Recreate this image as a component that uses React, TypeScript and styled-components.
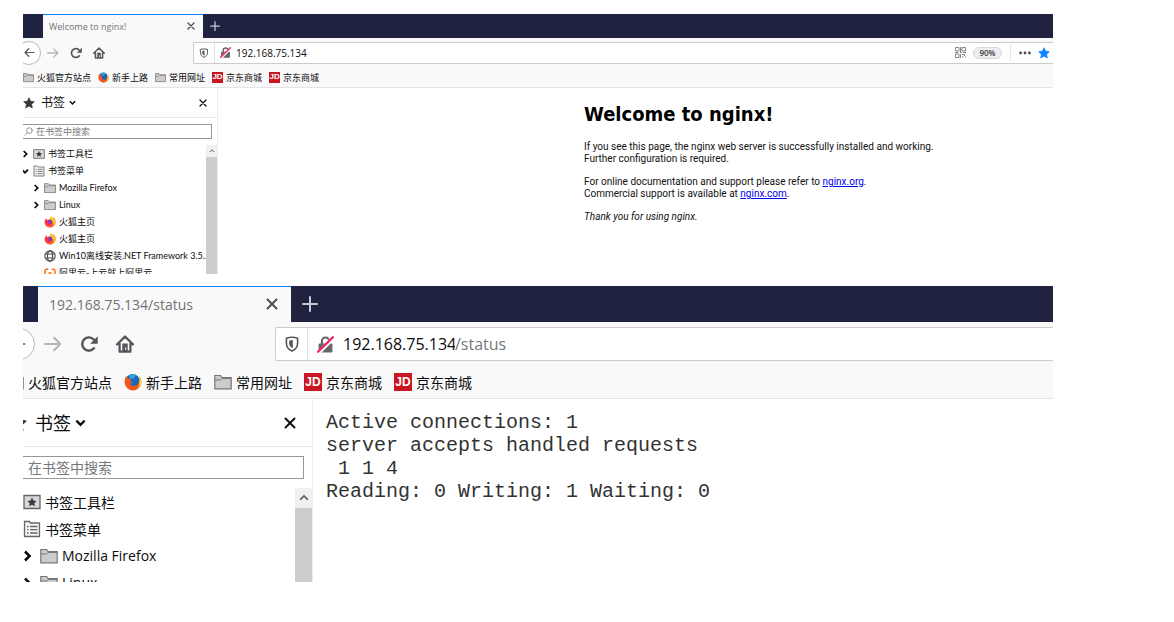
import React from "react";
import styled, { createGlobalStyle, css, ThemeProvider } from "styled-components";

const uiFont = `"Open Sans", "Noto Sans CJK SC", sans-serif`;

/* Two zoom levels of the same browser chrome. */
const compact = {
  height: 260, shift: 8,
  tabs: 24, tabLead: 28, tabWidth: 160, tabFont: 9, tabPad: 6, newTab: 24, tabIcon: 8, plus: 10,
  nav: 29, circle: 24, circlePad: 2, slot: 23, navIcon: 12, fieldGap: 83, field: 22,
  shieldSlot: 21, lockSlot: 21, urlFont: 10, urlWidth: 72, urlIcon: 11,
  marks: 21, marksPad: 8, marksGap: 7, markIcon: 11, markGap: 3, font: 9, badgeFont: 8,
  side: 203, head: 30, headPad: 8, headIcon: 12, headGap: 6, headFont: 12, closeRight: 10,
  searchTop: 6, search: 15, searchLeft: 5, searchRight: 5, searchIcon: 9, searchPad: 3, searchGap: 3,
  row: 17, rowPad: 5, twisty: 10, twistyGap: 3, rowIcon: 12, rowGap: 3, indent: 11, treeTop: 6,
  treeFont: `Lato, "Noto Sans CJK SC", sans-serif`,
  bar: 11, barButton: 12,
};

const large = {
  height: 296, shift: 24,
  tabs: 36, tabLead: 39, tabWidth: 253, tabFont: 14, tabPad: 11, newTab: 37, tabIcon: 12, plus: 16,
  nav: 44, circle: 32, circlePad: 4, slot: 36, navIcon: 18, fieldGap: 132, field: 34,
  shieldSlot: 32, lockSlot: 35, urlFont: 16, urlWidth: 112, urlIcon: 17,
  marks: 33, marksPad: 7, marksGap: 12, markIcon: 18, markGap: 4, font: 14, badgeFont: 12,
  side: 314, head: 48, headPad: 10, headIcon: 18, headGap: 8, headFont: 18, closeRight: 16,
  searchTop: 9, search: 23, searchLeft: 6, searchRight: 8, searchIcon: 14, searchPad: 3, searchGap: 5,
  row: 27, rowPad: 4, twisty: 14, twistyGap: 6, rowIcon: 18, rowGap: 4, indent: 17, treeTop: 9,
  treeFont: uiFont,
  bar: 17, barButton: 20,
};

type Scale = typeof compact;
const px = (key: keyof Scale) => ({ theme }: { theme: any }) => `${theme[key]}px`;

const Global = createGlobalStyle`
  * { box-sizing: border-box; }
  body { margin: 0; background: #fff; color: #0c0c0d; font-family: ${uiFont}; }
  button, input { font: inherit; color: inherit; margin: 0; padding: 0; border: 0; background: none; }
  button { display: flex; align-items: center; justify-content: center; }
  svg { display: block; flex: none; }
`;

const Page = styled.main`
  display: flex;
  flex-direction: column;
  gap: 12px;
  padding: 14px 121px 40px 23px;
`;

const Window = styled.section`
  overflow: hidden;
  height: ${px("height")};
`;

const Frame = styled.div`
  display: flex;
  flex-direction: column;
  height: 100%;
  margin-left: -${px("shift")};
`;

const TabStrip = styled.div`
  display: flex;
  flex: none;
  height: ${px("tabs")};
  padding-left: ${px("tabLead")};
  background: #20233f;
`;

const Tab = styled.div`
  display: flex;
  align-items: center;
  justify-content: space-between;
  width: ${px("tabWidth")};
  padding: 0 ${px("tabPad")} 1px ${px("tabPad")};
  border-top: 1px solid #0a84ff;
  background: #f9f9fa;
  color: #737378;
  font-size: ${px("tabFont")};
`;

const TabButton = styled.button`
  width: ${px("tabIcon")};
  height: 100%;
  color: #4a4a4f;
  margin: 0 2px;
`;

const NewTab = styled.button`
  width: ${px("newTab")};
  color: #c9cad3;
`;

const NavBar = styled.div`
  display: flex;
  flex: none;
  align-items: center;
  height: ${px("nav")};
  padding-left: ${px("circlePad")};
  background: #f9f9fa;
  color: #55555a;
`;

const BackButton = styled.button`
  width: ${px("circle")};
  height: ${px("circle")};
  border: 1px solid #b8b8ba;
  border-radius: 50%;
  background: #fff;
  flex: none;
`;

const NavButton = styled.button<{ $dim?: boolean }>`
  width: ${px("slot")};
  flex: none;
  ${({ $dim }) => $dim && css`color: #b5b5b8;`}
`;

const UrlField = styled.div`
  display: flex;
  align-items: center;
  flex: 1;
  height: ${px("field")};
  margin-left: ${px("fieldGap")};
  border: 1px solid #ccc;
  border-right: 0;
  border-radius: 2px 0 0 2px;
  background: #fff;
  font-size: ${px("urlFont")};
`;

const ShieldButton = styled.button`
  width: ${px("shieldSlot")};
  height: 100%;
  border-right: 1px solid #e0e0e2;
`;

const LockButton = styled.button`
  width: ${px("lockSlot")};
`;

const UrlInput = styled.input`
  width: ${px("urlWidth")};
  color: #0c0c0d;
  outline: 0;
`;

const UrlPath = styled.span`
  color: #77777a;
`;

const PageActions = styled.div`
  display: flex;
  align-items: center;
  gap: 7px;
  margin-left: auto;
  padding-right: 3px;
`;

const ZoomPill = styled.button`
  width: 29px;
  height: 12px;
  border: 1px solid #d8d8da;
  border-radius: 6px;
  background: #ededf0;
  color: #38383d;
  font-size: 8px;
  font-weight: 600;
`;

const Divider = styled.span`
  width: 1px;
  height: 16px;
  margin: 0 1px;
  background: #e4e4e6;
`;

const MarksBar = styled.nav`
  display: flex;
  flex: none;
  align-items: center;
  gap: ${px("marksGap")};
  height: ${px("marks")};
  padding-left: ${px("marksPad")};
  background: #f9f9fa;
  border-bottom: 1px solid #e4e4e6;
  font-size: ${px("font")};
`;

const Mark = styled.a`
  display: flex;
  align-items: center;
  gap: ${px("markGap")};
  color: #0c0c0d;
  text-decoration: none;
  white-space: nowrap;
`;

const JdBadge = styled.span`
  display: flex;
  align-items: center;
  justify-content: center;
  width: ${px("markIcon")};
  height: ${px("markIcon")};
  background: #c81623;
  color: #fff;
  font: bold ${px("badgeFont")}/1 "Liberation Sans", sans-serif;
`;

const Body = styled.div`
  display: flex;
  flex: 1;
  min-height: 0;
`;

const Sidebar = styled.aside`
  display: flex;
  flex-direction: column;
  flex: none;
  width: ${px("side")};
  border-right: 1px solid #ececee;
`;

const SideHead = styled.header`
  display: flex;
  align-items: center;
  justify-content: space-between;
  flex: none;
  height: ${px("head")};
  padding: 0 ${px("closeRight")} 0 ${px("headPad")};
  border-bottom: 1px solid #e8e8ea;
  font-size: ${px("headFont")};
`;

const SideTitle = styled.button`
  gap: ${px("headGap")};
  line-height: 1;
`;

const TitleText = styled.span`
  display: flex;
  align-items: center;
  gap: 4px;
`;

const SearchBox = styled.label`
  display: flex;
  align-items: center;
  flex: none;
  gap: ${px("searchGap")};
  height: ${px("search")};
  margin: ${px("searchTop")} ${px("searchRight")} 0 ${px("searchLeft")};
  padding-left: ${px("searchPad")};
  border: 1px solid #97979a;
  color: #77777a;
  font-size: ${px("font")};
`;

const SearchInput = styled.input`
  flex: 1;
  min-width: 0;
  outline: 0;
  &::placeholder { color: #77777a; opacity: 1; }
`;

const TreeArea = styled.div`
  display: flex;
  flex: 1;
  min-height: 0;
  margin-top: ${px("treeTop")};
`;

const Tree = styled.ul`
  flex: 1;
  min-width: 0;
  margin: 0;
  padding: 0;
  overflow: hidden;
  list-style: none;
  font-family: ${({ theme }: any) => theme.treeFont};
  font-size: ${px("font")};
`;

const Row = styled.li<{ $level: number }>`
  display: flex;
  align-items: center;
  height: ${px("row")};
  padding-left: ${({ theme, $level }: any) => theme.rowPad + theme.indent * $level}px;
  white-space: nowrap;
`;

const Twisty = styled.span`
  display: flex;
  justify-content: center;
  flex: none;
  width: ${px("twisty")};
  margin-right: ${px("twistyGap")};
`;

const RowLabel = styled.span`
  margin-left: ${px("rowGap")};
`;

const ScrollBar = styled.div`
  display: flex;
  flex-direction: column;
  flex: none;
  width: ${px("bar")};
  background: #cdcdcd;
`;

const ScrollButton = styled.button`
  height: ${px("barButton")};
  background: #f0f0f0;
  color: #606060;
`;

const Welcome = styled.article`
  flex: 1;
  padding: 14px 0 0 366px;
  color: #111;
  font: 10px/12px Roboto, sans-serif;
  white-space: nowrap;
  h1 { margin: 0 0 14px; color: #000; font: bold 20px/25px "DejaVu Sans Condensed", "DejaVu Sans", sans-serif; }
  p { margin: 0 0 11px; }
  a { color: #00e; }
`;

const Status = styled.pre`
  flex: 1;
  margin: 0;
  padding: 12px 0 0 13px;
  color: #333;
  font: 20px/23px "Liberation Mono", monospace;
`;

type IconProps = { size: number };
const stroke = { fill: "none", stroke: "currentColor", strokeWidth: 2, strokeLinecap: "round", strokeLinejoin: "round" } as const;

const Cross = ({ size }: IconProps) => (
  <svg width={size} height={size} viewBox="0 0 12 12" {...stroke} strokeWidth={1.9}><path d="M1.5 1.5l9 9M10.5 1.5l-9 9" /></svg>
);
const Plus = ({ size }: IconProps) => (
  <svg width={size} height={size} viewBox="0 0 16 16" {...stroke}><path d="M8 1v14M1 8h14" /></svg>
);
const Arrow = ({ size, back }: IconProps & { back?: boolean }) => (
  <svg width={size} height={size} viewBox="0 0 16 16" {...stroke} strokeWidth={1.8}>
    {back ? <path d="M14.5 8H1.5M7 2.5L1.5 8 7 13.5" /> : <path d="M1 8h13.500M9 2.500L14.500 8 9 13.500" />}
  </svg>
);
const Reload = ({ size }: IconProps) => (
  <svg width={size} height={size} viewBox="0 0 16 16">
    <path {...stroke} strokeWidth={2.200} d="M12.400 11.800A5.900 5.900 0 1 1 12.200 4" />
    <path fill="currentColor" d="M15.800 1v6.800H9z" />
  </svg>
);
const Home = ({ size }: IconProps) => (
  <svg width={size} height={size} viewBox="0 0 16 16">
    <path {...stroke} d="M1 8.300L8 1.300l7 7M3.200 7.500v7.300h9.600V7.500" />
    <path fill="currentColor" fillRule="evenodd" d="M5.600 7.500h4.800v7.300H5.600zM8 11v2.200h1V11z" />
  </svg>
);
const Shield = ({ size }: IconProps) => (
  <svg width={size} height={size} viewBox="0 0 16 16">
    <path {...stroke} strokeWidth={1.6} d="M2.400 2.200Q8 .4 13.600 2.200v5c0 4-2.100 6.400-5.600 7.800-3.500-1.400-5.600-3.800-5.600-7.800z" />
    <path fill="currentColor" d="M8.800 4l-3.600.6v2.800c0 2.400 1.400 3.800 3.600 4.900z" />
  </svg>
);
const Lock = ({ size }: IconProps) => (
  <svg width={size} height={size} viewBox="0 0 16 16">
    <path fill="none" stroke="#66666b" strokeWidth="2" d="M4.600 7.500V4.800a3.400 3.400 0 0 1 6.800 0v2.700" />
    <rect x="1.500" y="7" width="13" height="8.500" rx="1" fill="#66666b" />
    <path stroke="#fff" strokeWidth="3.600" d="M1.600 15.800L15.600 1.600" />
    <path stroke="#f0245a" strokeWidth="2.200" strokeLinecap="round" d="M1 14.800L15 1.200" />
  </svg>
);
const Folder = ({ size }: IconProps) => (
  <svg width={size} height={size} viewBox="0 0 18 18">
    <path d="M.8 15.800V2.500h5.700l1.500 2h9.200v11.300z" fill="#ccc" stroke="#77777a" strokeWidth="1.200" />
    <path d="M1 7h5.500l1.500-1.500h9" fill="none" stroke="#77777a" />
  </svg>
);
const Firefox = ({ size, old }: IconProps & { old?: boolean }) =>
  old ? (
    <svg width={size} height={size} viewBox="0 0 18 18">
      <circle cx="8.600" cy="8" r="7" fill="#1668bd" />
      <path fill="#29a8e0" d="M5 2.500C7 1 10 .8 12 2L9.500 6 6 5z" />
      <path fill="#ef5a1c" d="M1.800 3.500C.6 6 .3 9 1 11.500 2.200 15 5.400 17.400 9 17.400c4.600 0 8.300-3.700 8.300-8.200 0-2.500-.8-4.500-2.100-6 .4 2 .5 3.600.1 5.200-.7 3-3.200 4.700-5.900 4.400-2-.2-3.400-1.300-3.800-2.500 1.200.6 2.600.2 3.300-.8-1 0-2.200-.4-2.600-1.400-.2-.8.1-1.400 1.200-1.800-.9-.9-2-1.100-3.100-.9-.8-.5-1.100-1.100-1.300-1.900z" />
      <path fill="#ffcf26" d="M15.200 3.200c1.300 1.500 2.100 3.500 2.100 6 0 3-1.600 5.600-4 7 1.500-1.700 2.200-3.700 1.700-6 .8-2.300.7-4.600.2-7z" />
    </svg>
  ) : (
    <svg width={size} height={size} viewBox="0 0 18 18">
      <path fill="#ff5a2c" d="M3.500 3C1 6 .4 8.500 1 11.200 2 15 5.200 17.400 9 17.400c4.800 0 8.400-3.700 8.400-8.300 0-3-1.300-5.200-3.300-6.700L12 5 4.500 6z" />
      <path fill="#ffc525" d="M9.500.6c3.800.9 7.600 4.100 7.700 8.600.1 3.600-2.100 6.100-4.300 7 1.700-2.300 2-5 .8-7-.8-1.400-3.700-2-4.600-4C8.500 3.700 8.700 2 9.500.6z" />
      <circle cx="8.700" cy="8.600" r="3.300" fill="#6c3bc9" />
      <path fill="#f5325f" d="M1.600 6.500c2-.7 4-.2 5 .8 1.400.1 2 .6 1.500 1.400-.7 1-1.800.8-1.900 2 1.300 1.800 3.700 1.600 5.300.7-1 2.900-4 4-6.500 2.500C2.500 12.400 1 9.600 1.600 6.500z" />
    </svg>
  );
const Star = ({ size, color = "#38383d" }: IconProps & { color?: string }) => (
  <svg width={size} height={size} viewBox="0 0 16 16">
    <path fill={color} stroke={color} strokeLinejoin="round" d="M8 1l2.100 4.600 5 .6-3.700 3.400 1 5L8 12.100l-4.400 2.500 1-5L.9 6.200l5-.6z" />
  </svg>
);
const Chevron = ({ size, turn = 0, weight = 2 }: IconProps & { turn?: number; weight?: number }) => (
  <svg width={size} height={size} viewBox="0 0 12 12" {...stroke} strokeWidth={weight} strokeLinecap="butt" strokeLinejoin="miter">
    <path transform={`rotate(${turn} 6 6)`} d="M1.500 4L6 8.500 10.500 4" />
  </svg>
);
const Lens = ({ size }: IconProps) => (
  <svg width={size} height={size} viewBox="0 0 12 12" {...stroke} strokeWidth={1}><circle cx="7.200" cy="4.800" r="3.800" /><path d="M4.500 7.500L1 11" /></svg>
);
const ToolbarIcon = ({ size }: IconProps) => (
  <svg width={size} height={size} viewBox="0 0 18 18">
    <path d="M1 2.500h16v13H1z" fill="#d8d8da" stroke="#66666b" strokeWidth="1.300" />
    <path fill="#38383d" d="M9 4.500l1.400 3 3.300.4-2.400 2.200.6 3.200L9 11.700l-2.900 1.600.6-3.200-2.400-2.200 3.300-.4z" />
  </svg>
);
const MenuIcon = ({ size }: IconProps) => (
  <svg width={size} height={size} viewBox="0 0 18 18" fill="none" stroke="#66666b" strokeWidth="1.300">
    <path d="M1.500 16.500v-15h5l1 1.500h9v13.500z" fill="#f4f4f5" />
    <path d="M4 6.500h1.500M7 6.500h7.500M4 9.700h1.500M7 9.700h7.500M4 13h1.500M7 13h7.500" />
  </svg>
);
const Globe = ({ size }: IconProps) => (
  <svg width={size} height={size} viewBox="0 0 18 18" fill="none" stroke="#4a4a4f" strokeWidth="1.700">
    <circle cx="9" cy="9" r="7.700" /><ellipse cx="9" cy="9" rx="3.800" ry="7.700" /><path d="M2.500 6h13M2.500 12h13" />
  </svg>
);
const Aliyun = ({ size }: IconProps) => (
  <svg width={size} height={size} viewBox="0 0 18 18" fill="none" stroke="#ff6a00" strokeWidth="2.200">
    <path d="M6.500 3.500H4a2.500 2.500 0 0 0-2.500 2.500v6A2.500 2.500 0 0 0 4 14.500h2.500M11.500 3.500H14a2.500 2.500 0 0 1 2.500 2.500v6a2.500 2.500 0 0 1-2.500 2.500h-2.500M6.500 9h5" />
  </svg>
);
const QrCode = () => (
  <svg width="11" height="11" viewBox="0 0 11 11" fill="none" stroke="#85858a">
    <path d="M.5.500h3.500v3.500H.5zM7 .5h3.500v3.500H7zM.5 7h3.500v3.500H.5zM5.500 0v5M0 5.500h3M5 5.500h2M8 5.500h3M5.500 7v4M7 7.500h2M9.500 7v2M7 10h1.500M10 10h1" />
  </svg>
);
const Dots = () => (
  <svg width="12" height="12" viewBox="0 0 12 12" fill="#4a4a4f"><circle cx="1.600" cy="6" r="1.400" /><circle cx="6" cy="6" r="1.400" /><circle cx="10.400" cy="6" r="1.400" /></svg>
);

type TreeItem = { label: string; level: number; icon: React.FC<IconProps>; twisty?: "open" | "closed" };

const tree: TreeItem[] = [
  { label: "书签工具栏", level: 0, icon: ToolbarIcon, twisty: "closed" },
  { label: "书签菜单", level: 0, icon: MenuIcon, twisty: "open" },
  { label: "Mozilla Firefox", level: 1, icon: Folder, twisty: "closed" },
  { label: "Linux", level: 1, icon: Folder, twisty: "closed" },
  { label: "火狐主页", level: 1, icon: Firefox },
  { label: "火狐主页", level: 1, icon: Firefox },
  { label: "Win10离线安装.NET Framework 3.5..", level: 1, icon: Globe },
  { label: "阿里云-上云就上阿里云", level: 1, icon: Aliyun },
];

type BrowserProps = {
  scale: Scale;
  title: string;
  path?: string;
  actions?: React.ReactNode;
  items: TreeItem[];
  children: React.ReactNode;
};

function Browser({ scale: s, title, path, actions, items, children }: BrowserProps) {
  return (
    <ThemeProvider theme={s}>
      <Window>
        <Frame>
          <TabStrip>
            <Tab>
              <span>{title}</span>
              <TabButton aria-label="关闭标签页"><Cross size={s.tabIcon} /></TabButton>
            </Tab>
            <NewTab aria-label="新建标签页"><Plus size={s.plus} /></NewTab>
          </TabStrip>
          <NavBar>
            <BackButton aria-label="后退"><Arrow size={s.navIcon - 4 + (path ? 0 : 3)} back /></BackButton>
            <NavButton aria-label="前进" $dim><Arrow size={s.navIcon} /></NavButton>
            <NavButton aria-label="刷新"><Reload size={s.navIcon} /></NavButton>
            <NavButton aria-label="主页"><Home size={s.navIcon} /></NavButton>
            <UrlField>
              <ShieldButton aria-label="跟踪保护"><Shield size={s.urlIcon - 1} /></ShieldButton>
              <LockButton aria-label="连接不安全"><Lock size={s.urlIcon} /></LockButton>
              <UrlInput aria-label="网址" defaultValue="192.168.75.134" />
              {path && <UrlPath>{path}</UrlPath>}
              {actions}
            </UrlField>
          </NavBar>
          <MarksBar>
            <Mark href="#"><Folder size={s.markIcon} />火狐官方站点</Mark>
            <Mark href="#"><Firefox size={s.markIcon} old />新手上路</Mark>
            <Mark href="#"><Folder size={s.markIcon} />常用网址</Mark>
            <Mark href="#"><JdBadge>JD</JdBadge>京东商城</Mark>
            <Mark href="#"><JdBadge>JD</JdBadge>京东商城</Mark>
          </MarksBar>
          <Body>
            <Sidebar>
              <SideHead>
                <SideTitle>
                  <Star size={s.headIcon} />
                  <TitleText>书签 <Chevron size={s.tabIcon - 1} weight={2.600} /></TitleText>
                </SideTitle>
                <button aria-label="关闭侧栏"><Cross size={s.tabIcon} /></button>
              </SideHead>
              <SearchBox>
                <Lens size={s.searchIcon} />
                <SearchInput aria-label="在书签中搜索" placeholder="在书签中搜索" />
              </SearchBox>
              <TreeArea>
                <Tree>
                  {items.map(({ label, level, icon: Icon, twisty }, i) => (
                    <Row key={i} $level={level}>
                      <Twisty>{twisty && <Chevron size={s.tabIcon} turn={twisty === "open" ? 0 : -90} weight={2.600} />}</Twisty>
                      <Icon size={s.rowIcon} />
                      <RowLabel>{label}</RowLabel>
                    </Row>
                  ))}
                </Tree>
                <ScrollBar>
                  <ScrollButton aria-label="向上滚动"><Chevron size={s.tabIcon - 2} turn={180} /></ScrollButton>
                </ScrollBar>
              </TreeArea>
            </Sidebar>
            {children}
          </Body>
        </Frame>
      </Window>
    </ThemeProvider>
  );
}

export default function App() {
  return (
    <>
      <Global />
      <Page>
        <Browser
          scale={compact}
          title="Welcome to nginx!"
          items={tree}
          actions={
            <PageActions>
              <QrCode />
              <ZoomPill>90%</ZoomPill>
              <Divider />
              <Dots />
              <Star size={12} color="#0a84ff" />
            </PageActions>
          }
        >
          <Welcome>
            <h1>Welcome to nginx!</h1>
            <p>If you see this page, the nginx web server is successfully installed and working.<br />Further configuration is required.</p>
            <p>For online documentation and support please refer to <a href="http://nginx.org/">nginx.org</a>.<br />Commercial support is available at <a href="http://nginx.com/">nginx.com</a>.</p>
            <p><em>Thank you for using nginx.</em></p>
          </Welcome>
        </Browser>
        <Browser scale={large} title="192.168.75.134/status" path="/status" items={tree.slice(0, 4)}>
          <Status>{"Active connections: 1\nserver accepts handled requests\n 1 1 4\nReading: 0 Writing: 1 Waiting: 0"}</Status>
        </Browser>
      </Page>
    </>
  );
}
